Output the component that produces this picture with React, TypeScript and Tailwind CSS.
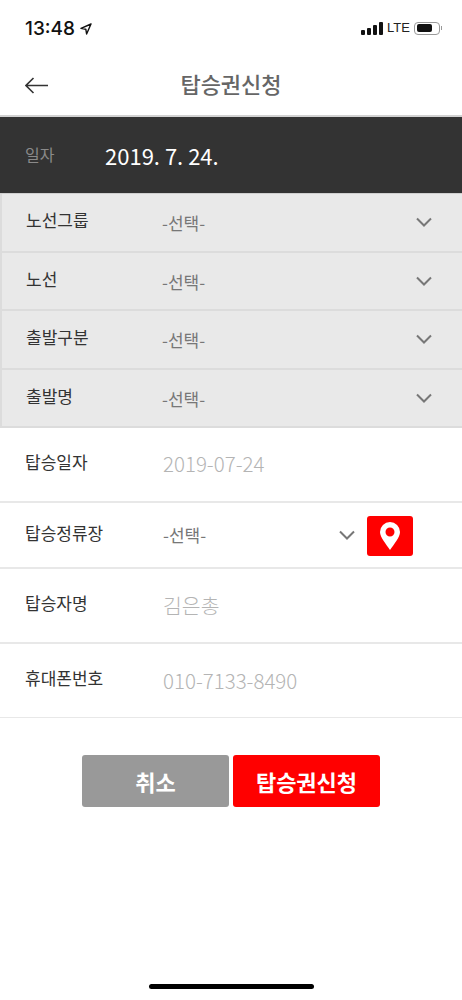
const font = { fontFamily: '"Noto Sans CJK KR", "Noto Sans", sans-serif' }

const selectRows = ["노선그룹", "노선", "출발구분", "출발명"]

function Chevron({ className = "" }: { className?: string }) {
  return (
    <svg className={className} width="16" height="10" viewBox="0 0 16 10" fill="none" stroke="#777" strokeWidth="2">
      <path d="M1 1.5l7 7 7-7" />
    </svg>
  )
}

function StatusBar() {
  return (
    <div className="flex h-[52px] items-start justify-between pl-[25px] pr-[20px] pt-[17px]">
      <div className="flex items-center gap-[5px]">
        <span className="text-[19px] leading-[24px] font-medium text-[#111]" style={{ fontFamily: "Inter, sans-serif" }}>13:48</span>
        <svg width="12" height="12" viewBox="0 0 12 12" fill="none" stroke="#111" strokeWidth="1.4" strokeLinejoin="round">
          <path d="M11 1L1 5.4l4.8.8.8 4.8z" />
        </svg>
      </div>
      <div className="flex items-center gap-[4px] pt-[3px]">
        <div className="flex items-end gap-[2px]">
          <div className="h-[5px] w-[4px] rounded-[1px] bg-[#111]" />
          <div className="h-[7px] w-[4px] rounded-[1px] bg-[#111]" />
          <div className="h-[10px] w-[4px] rounded-[1px] bg-[#111]" />
          <div className="h-[13px] w-[4px] rounded-[1px] bg-[#111]" />
        </div>
        <span className="text-[13px] leading-[16px] text-[#222]" style={{ fontFamily: '"Liberation Sans", sans-serif' }}>LTE</span>
        <div className="flex items-center gap-[1px]">
          <div className="flex h-[13px] w-[26px] items-center rounded-[4px] border border-[#999] p-[1.5px]">
            <div className="h-full w-[15px] rounded-[2px] bg-[#111]" />
          </div>
          <div className="h-[4px] w-[1px] bg-[#999]" />
        </div>
      </div>
    </div>
  )
}

function SelectRow({ label }: { label: string }) {
  return (
    <div className="flex h-[58.5px] border-b-2 border-l-2 border-[#dcdcdc] bg-[#e9e9e9]">
      <span className="w-[160px] pl-[24px] pt-[13px] text-[17px] leading-[26px] text-[#333]">{label}</span>
      <span className="flex-1 pt-[16px] text-[17px] leading-[26px] text-[#777]">-선택-</span>
      <div className="pr-[30px] pt-[23px]">
        <Chevron />
      </div>
    </div>
  )
}

export default function App() {
  return (
    <div className="flex min-h-[1000px] w-[462px] flex-col bg-white" style={font}>
      <StatusBar />

      <div className="relative flex h-[65px] items-center justify-center border-b-2 border-[#d2d2d2] pb-[1px]">
        <svg className="absolute left-[25px] top-[25px]" width="23" height="17" viewBox="0 0 23 17" fill="none" stroke="#333" strokeWidth="1.6">
          <path d="M23 8.5H1M8.5 1L1 8.5 8.5 16" />
        </svg>
        <span className="text-[22px] leading-[30px] font-medium text-[#666]">탑승권신청</span>
      </div>

      <div className="flex h-[76px] items-center bg-[#333] pl-[25px]">
        <span className="mb-[2px] w-[80px] text-[16px] text-[#8a8a8a]">일자</span>
        <span className="text-[22px] leading-[32px] text-white">2019. 7. 24.</span>
      </div>

      <div className="h-[1px] bg-[#cfcfcf]" />

      {selectRows.map(label => (
        <SelectRow key={label} label={label} />
      ))}

      <div className="flex h-[75px] border-b-2 border-[#e8e8e8]">
        <span className="w-[163px] pl-[25px] pt-[21px] text-[17px] leading-[26px] text-[#333]">탑승일자</span>
        <span className="pt-[20px] text-[20.5px] leading-[30px] font-light text-[#b4b4b4]">2019-07-24</span>
      </div>

      <div className="flex h-[66px] border-b-2 border-[#e8e8e8]">
        <span className="w-[163px] pl-[25px] pt-[17px] text-[17px] leading-[26px] text-[#333]">탑승정류장</span>
        <span className="w-[176px] pt-[19px] text-[17px] leading-[26px] text-[#777]">-선택-</span>
        <div className="w-[28px] pt-[27px]">
          <Chevron />
        </div>
        <div className="mt-[13px] flex h-[40px] w-[46px] items-center justify-center rounded-[3px] bg-[#ff0000]">
          <svg width="20" height="28" viewBox="0 0 20 28">
            <path fillRule="evenodd" fill="#fff" d="M10 0a10 10 0 0 1 10 10c0 5.500-6 12-10 18C6 22 0 15.500 0 10A10 10 0 0 1 10 0zm0 5.500a4.500 4.500 0 1 0 0 9 4.500 4.500 0 0 0 0-9z" />
          </svg>
        </div>
      </div>

      <div className="flex h-[75px] border-b-2 border-[#e8e8e8]">
        <span className="w-[163px] pl-[25px] pt-[21px] text-[17px] leading-[26px] text-[#333]">탑승자명</span>
        <span className="pt-[21px] text-[20.5px] leading-[30px] font-light text-[#b4b4b4]">김은총</span>
      </div>

      <div className="flex h-[74px] border-b border-[#e8e8e8]">
        <span className="w-[163px] pl-[25px] pt-[21px] text-[17px] leading-[26px] text-[#333]">휴대폰번호</span>
        <span className="pt-[21px] text-[20.5px] leading-[30px] font-light text-[#b4b4b4]">010-7133-8490</span>
      </div>

      <div className="mt-[37px] flex justify-center gap-[4px]">
        <button className="h-[52px] w-[147px] rounded-[3px] bg-[#999] text-[22px] font-bold text-white">취소</button>
        <button className="h-[52px] w-[147px] rounded-[3px] bg-[#ff0000] text-[22px] font-bold text-white">탑승권신청</button>
      </div>

      <div className="mx-auto mt-[177px] h-[5px] w-[165px] rounded-full bg-black" />
    </div>
  )
}
